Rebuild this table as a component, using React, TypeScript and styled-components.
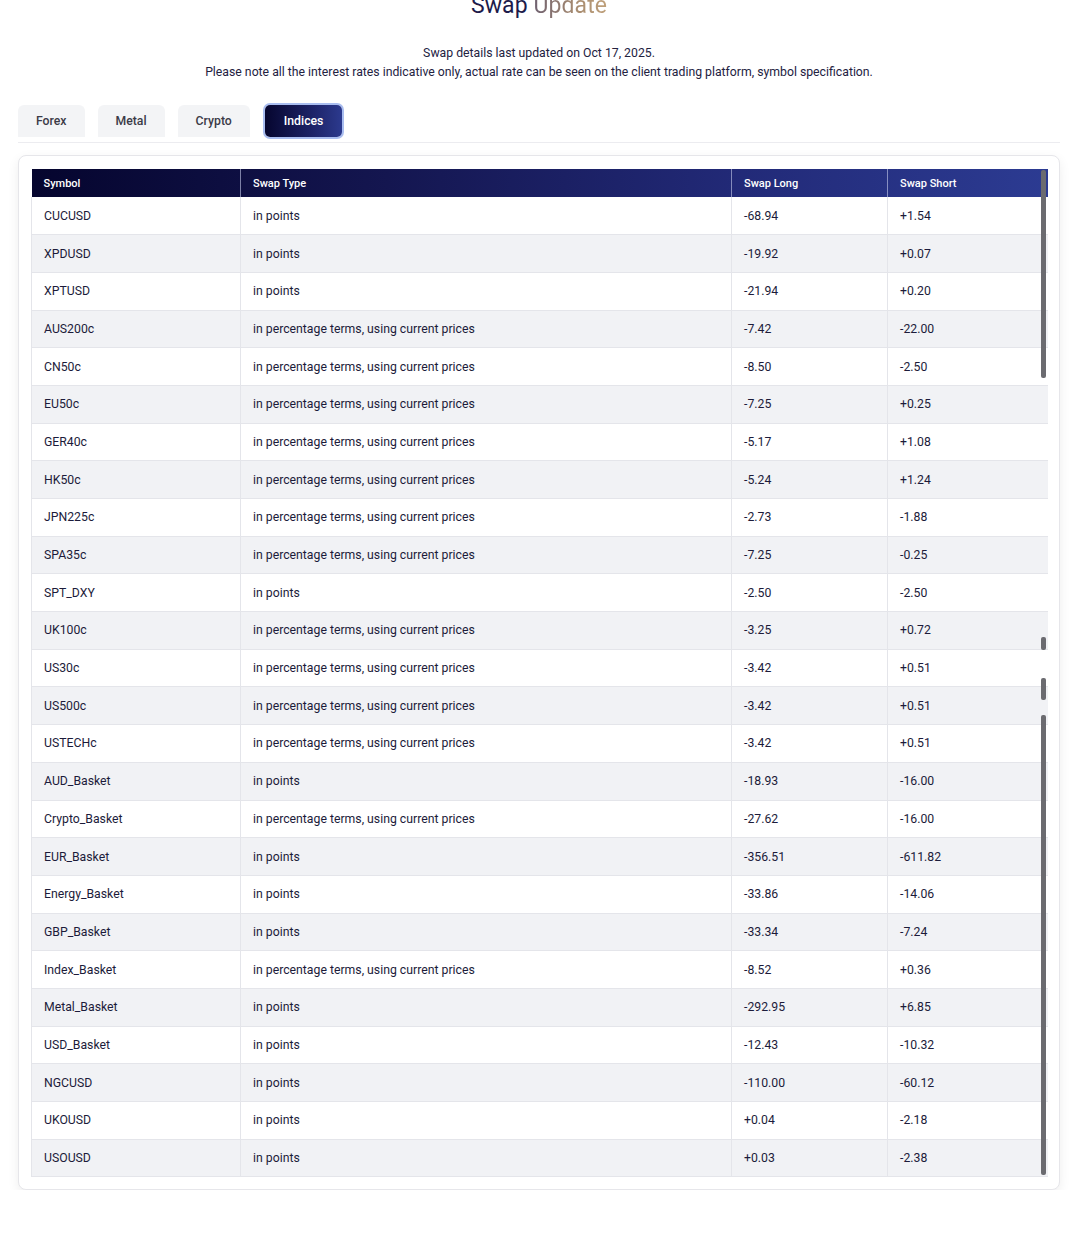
import React from "react";
import styled, { createGlobalStyle } from "styled-components";

const Global = createGlobalStyle`
  html, body { margin: 0; padding: 0; background: #ffffff; }
  body { font-family: Roboto, Inter, "Liberation Sans", sans-serif; color: #1c1b3a; }
`;

const Page = styled.div`
  width: 1042px;
  padding: 0 20px 0 18px;
  box-sizing: content-box;
  overflow: hidden;
`;

const Title = styled.h2`
  margin: -9px 0 0;
  text-align: center;
  font-size: 23px;
  font-weight: 400;
  line-height: 29px;
  letter-spacing: 0.1px;
`;

const Dark = styled.span`
  color: #1d1b4b;
`;

const Gold = styled.span`
  background: linear-gradient(90deg, #6e6070 0%, #a88c70 60%, #bfa07a 100%);
  -webkit-background-clip: text;
  background-clip: text;
  color: transparent;
`;

const Notes = styled.div`
  margin-top: 24px;
  text-align: center;
  font-size: 12.25px;
  line-height: 19px;
  color: #23223f;
`;

const TabBar = styled.div`
  margin-top: 23px;
  display: flex;
  gap: 13px;
  padding-bottom: 5px;
  border-bottom: 1px solid #ececf0;
`;

const Tab = styled.button<{ $active?: boolean }>`
  height: 32px;
  padding: 0 ${(p) => (p.$active ? "19px" : "18px")};
  border: none;
  font-family: inherit;
  font-size: 12.25px;
  font-weight: 500;
  cursor: pointer;
  color: ${(p) => (p.$active ? "#ffffff" : "#3b3b48")};
  background: ${(p) =>
    p.$active ? "linear-gradient(90deg, #06062f 0%, #1c2266 60%, #2c3a8e 100%)" : "#f3f4f6"};
  box-shadow: ${(p) => (p.$active ? "0 0 0 2px #a9bdf0" : "none")};
  border-radius: ${(p) => (p.$active ? "5px" : "6px 6px 0 0")};
  margin-left: ${(p) => (p.$active ? "2px" : "0")};
`;

const Card = styled.div`
  margin-top: 12px;
  padding: 13px 12px 12px;
  border: 1px solid #e6e6ea;
  border-radius: 8px;
  box-shadow: 0 4px 12px rgba(0, 0, 0, 0.07);
  background: #fff;
`;

const Scroller = styled.div`
  position: relative;
  width: 1016px;
`;

const Table = styled.table`
  width: 100%;
  border-collapse: collapse;
  table-layout: fixed;
  font-size: 12.25px;
`;

const Head = styled.thead`
  background: linear-gradient(90deg, #05052e 0%, #141650 35%, #222a78 70%, #2c3b92 100%);
`;

const Th = styled.th<{ $w: number }>`
  box-sizing: border-box;
  width: ${(p) => p.$w}px;
  height: 28px;
  padding: 0 12px;
  text-align: left;
  font-size: 11px;
  font-weight: 500;
  color: #ffffff;
  border-left: 1px solid rgba(200, 205, 235, 0.6);
  &:first-child { border-left: none; }
`;

const Row = styled.tr<{ $alt: boolean }>`
  background: ${(p) => (p.$alt ? "#f1f2f5" : "#ffffff")};
  border-bottom: 1px solid #e4e5ea;
`;

const Td = styled.td`
  box-sizing: border-box;
  height: 37.7px;
  padding: 0 12px;
  color: #1c1b3a;
  border-left: 1px solid #e4e5ea;
`;

const Thumb = styled.div<{ $top: number; $h: number }>`
  position: absolute;
  right: 1px;
  top: ${(p) => p.$top}px;
  height: ${(p) => p.$h}px;
  width: 5px;
  border-radius: 2px;
  background: #6b6b70;
`;

const rows: [string, string, string, string][] = [
  ["CUCUSD", "in points", "-68.94", "+1.54"],
  ["XPDUSD", "in points", "-19.92", "+0.07"],
  ["XPTUSD", "in points", "-21.94", "+0.20"],
  ["AUS200c", "in percentage terms, using current prices", "-7.42", "-22.00"],
  ["CN50c", "in percentage terms, using current prices", "-8.50", "-2.50"],
  ["EU50c", "in percentage terms, using current prices", "-7.25", "+0.25"],
  ["GER40c", "in percentage terms, using current prices", "-5.17", "+1.08"],
  ["HK50c", "in percentage terms, using current prices", "-5.24", "+1.24"],
  ["JPN225c", "in percentage terms, using current prices", "-2.73", "-1.88"],
  ["SPA35c", "in percentage terms, using current prices", "-7.25", "-0.25"],
  ["SPT_DXY", "in points", "-2.50", "-2.50"],
  ["UK100c", "in percentage terms, using current prices", "-3.25", "+0.72"],
  ["US30c", "in percentage terms, using current prices", "-3.42", "+0.51"],
  ["US500c", "in percentage terms, using current prices", "-3.42", "+0.51"],
  ["USTECHc", "in percentage terms, using current prices", "-3.42", "+0.51"],
  ["AUD_Basket", "in points", "-18.93", "-16.00"],
  ["Crypto_Basket", "in percentage terms, using current prices", "-27.62", "-16.00"],
  ["EUR_Basket", "in points", "-356.51", "-611.82"],
  ["Energy_Basket", "in points", "-33.86", "-14.06"],
  ["GBP_Basket", "in points", "-33.34", "-7.24"],
  ["Index_Basket", "in percentage terms, using current prices", "-8.52", "+0.36"],
  ["Metal_Basket", "in points", "-292.95", "+6.85"],
  ["USD_Basket", "in points", "-12.43", "-10.32"],
  ["NGCUSD", "in points", "-110.00", "-60.12"],
  ["UKOUSD", "in points", "+0.04", "-2.18"],
  ["USOUSD", "in points", "+0.03", "-2.38"],
];

const tabs = ["Forex", "Metal", "Crypto", "Indices"];

export default function App() {
  return (
    <>
      <Global />
      <Page>
        <Title>
          <Dark>Swap </Dark>
          <Gold>Update</Gold>
        </Title>
        <Notes>
          Swap details last updated on Oct 17, 2025.
          <br />
          Please note all the interest rates indicative only, actual rate can be seen on the client trading platform, symbol specification.
        </Notes>
        <TabBar>
          {tabs.map((t) => (
            <Tab key={t} $active={t === "Indices"}>
              {t}
            </Tab>
          ))}
        </TabBar>
        <Card>
          <Scroller>
            <Table>
              <Head>
                <tr>
                  <Th $w={209}>Symbol</Th>
                  <Th $w={491}>Swap Type</Th>
                  <Th $w={156}>Swap Long</Th>
                  <Th $w={160}>Swap Short</Th>
                </tr>
              </Head>
              <tbody>
                {rows.map((r, i) => (
                  <Row key={r[0]} $alt={i % 2 === 1}>
                    {r.map((c, j) => (
                      <Td key={j}>{c}</Td>
                    ))}
                  </Row>
                ))}
              </tbody>
            </Table>
            <Thumb $top={1} $h={208} />
            <Thumb $top={468} $h={13} />
            <Thumb $top={509} $h={22} />
            <Thumb $top={546} $h={460} />
          </Scroller>
        </Card>
      </Page>
    </>
  );
}
